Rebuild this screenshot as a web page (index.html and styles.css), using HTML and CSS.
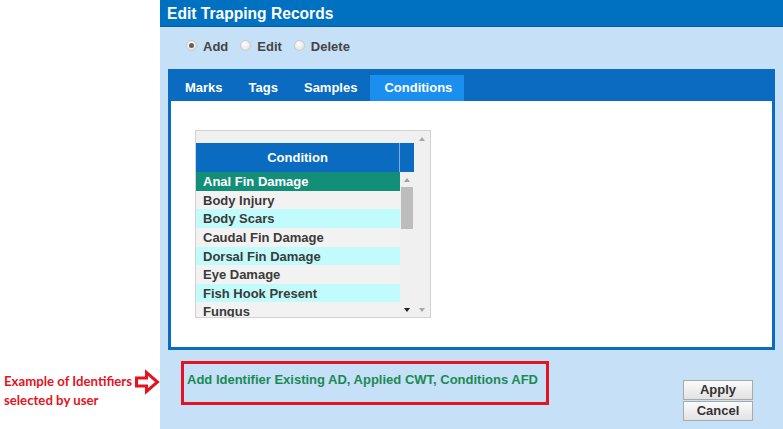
FILE: index.html
```html
<!DOCTYPE html>
<html>
<head>
<meta charset="utf-8">
<link rel="stylesheet" href="styles.css">
</head>
<body>
<div class="page">
  <aside class="note-col">
    <div class="note">
      <div class="note-text">Example of Identifiers<br>selected by user</div>
      <svg class="note-arrow" width="26" height="26" viewBox="0 0 26 26">
        <path d="M2.5 9 H12.5 V3.5 L23.5 13 L12.5 22.5 V17 H2.5 Z" fill="#fff" stroke="#e3141f" stroke-width="3" stroke-linejoin="miter"/>
      </svg>
    </div>
  </aside>
  <main class="dialog">
    <header class="title">Edit Trapping Records</header>
    <div class="modes">
      <label class="mode"><span class="radio checked"></span>Add</label>
      <label class="mode"><span class="radio"></span>Edit</label>
      <label class="mode"><span class="radio"></span>Delete</label>
    </div>
    <section class="tabpanel">
      <nav class="tabs">
        <span class="tab">Marks</span>
        <span class="tab">Tags</span>
        <span class="tab">Samples</span>
        <span class="tab active">Conditions</span>
      </nav>
      <div class="tab-body">
        <div class="listbox">
          <div class="list-inner">
            <div class="list-head">
              <div class="head-cell">Condition</div>
              <div class="head-spacer"></div>
            </div>
            <div class="list-body">
              <div class="rows">
                <div class="row sel">Anal Fin Damage</div>
                <div class="row">Body Injury</div>
                <div class="row alt">Body Scars</div>
                <div class="row">Caudal Fin Damage</div>
                <div class="row alt">Dorsal Fin Damage</div>
                <div class="row">Eye Damage</div>
                <div class="row alt">Fish Hook Present</div>
                <div class="row">Fungus</div>
              </div>
              <div class="inner-scroll">
                <span class="arr up dark"></span>
                <span class="thumb"></span>
                <span class="grow"></span>
                <span class="arr down black"></span>
              </div>
            </div>
          </div>
          <div class="outer-scroll">
            <span class="arr up"></span>
            <span class="grow"></span>
            <span class="arr down"></span>
          </div>
        </div>
      </div>
    </section>
    <div class="footer">
      <div class="selected">Add Identifier Existing AD, Applied CWT, Conditions AFD</div>
      <div class="buttons">
        <button class="btn">Apply</button>
        <button class="btn">Cancel</button>
      </div>
    </div>
  </main>
</div>
</body>
</html>
```

FILE: styles.css
```css
html, body {
  margin: 0;
  padding: 0;
  background: #ffffff;
}
body {
  font-family: "Liberation Sans", Arial, sans-serif;
  font-weight: bold;
  font-size: 13px;
}
.page {
  display: flex;
  width: 783px;
  height: 429px;
  overflow: hidden;
}
.note-col {
  width: 160px;
  flex: none;
  background: #ffffff;
}
.note {
  display: flex;
  align-items: flex-start;
  padding-top: 369px;
  padding-left: 4px;
}
.note-text {
  font-family: Lato, "Open Sans", sans-serif;
  font-weight: bold;
  font-size: 13.2px;
  line-height: 19px;
  color: #e3141f;
  padding-top: 3px;
  width: 130px;
  white-space: nowrap;
}
.note-arrow {
  margin-top: 0px;
  margin-left: 0px;
}
.dialog {
  flex: 1;
  background: #c6e0f8;
  display: flex;
  flex-direction: column;
}
.title {
  height: 26px;
  background: #0070c0;
  border-bottom: 1px solid #0a5c9e;
  color: #ffffff;
  font-size: 15.6px;
  line-height: 27px;
  padding-left: 7px;
}
.modes {
  height: 42px;
  display: flex;
  align-items: center;
  padding-left: 26px;
  color: #444;
  font-size: 13px;
  box-sizing: border-box;
  padding-bottom: 4px;
}
.mode {
  display: flex;
  align-items: center;
  margin-right: 12px;
}
.radio {
  width: 9px;
  height: 9px;
  border-radius: 50%;
  border: 1px solid #c8c8c8;
  background: radial-gradient(circle at 40% 35%, #fdfdfd, #dcdcdc);
  margin-right: 6px;
  margin-top: -2px;
  position: relative;
}
.radio.checked::after {
  content: "";
  position: absolute;
  left: 2px;
  top: 2px;
  width: 5px;
  height: 5px;
  border-radius: 50%;
  background: #6a5f58;
}
.tabpanel {
  margin: 0 8px 0 8px;
  border: 3px solid #0a6bc0;
  border-top: none;
  background: #ffffff;
  height: 281px;
  box-sizing: border-box;
  display: flex;
  flex-direction: column;
}
.tabs {
  height: 32px;
  background: #0a6bc0;
  display: flex;
  align-items: flex-end;
}
.tab {
  height: 26px;
  line-height: 25px;
  padding: 0 13px;
  color: #ffffff;
  font-size: 13px;
}
.tab:first-child { padding-left: 14px; }
.tab.active {
  background: #1a8ff0;
  padding: 0 12px 0 14px;
}
.tab-body {
  flex: 1;
  padding: 29px 0 0 24px;
}
.listbox {
  width: 236px;
  height: 188px;
  border: 1px solid #d2d2d2;
  box-sizing: border-box;
  display: flex;
  background: #f0f0f0;
  overflow: hidden;
}
.list-inner {
  width: 218px;
  padding-top: 12px;
  display: flex;
  flex-direction: column;
}
.list-head {
  display: flex;
  height: 29px;
}
.head-cell {
  width: 203px;
  background: #0a6bc0;
  color: #ffffff;
  text-align: center;
  line-height: 29px;
  font-size: 13px;
  border-right: 1px solid #7fb0dc;
}
.head-spacer {
  flex: 1;
  background: #0a6bc0;
}
.list-body {
  display: flex;
  flex: 1;
  overflow: hidden;
}
.rows {
  width: 204px;
}
.row {
  height: 18.65px;
  line-height: 19px;
  padding-left: 7px;
  color: #3a3a3a;
  background: #f2f2f2;
  font-size: 13px;
  white-space: nowrap;
}
.row.alt {
  background: #c2fbfb;
}
.row.sel {
  background: #138f79;
  color: #ffffff;
}
.inner-scroll {
  width: 14px;
  display: flex;
  flex-direction: column;
  align-items: center;
  background: #f0f0f0;
}
.outer-scroll {
  flex: 1;
  display: flex;
  flex-direction: column;
  align-items: center;
  padding: 6px 0 5px;
}
.grow { flex: 1; }
.arr {
  width: 0;
  height: 0;
  border-left: 3.5px solid transparent;
  border-right: 3.5px solid transparent;
}
.arr.up {
  border-bottom: 4px solid #a8a8a8;
}
.arr.down {
  border-top: 4px solid #a8a8a8;
}
.inner-scroll .arr.up {
  margin-top: 6px;
  border-bottom-color: #a0a0a0;
}
.inner-scroll .arr.down {
  margin-bottom: 5px;
  border-top-color: #222;
}
.thumb {
  width: 12px;
  height: 42px;
  background: #bdbdbd;
  margin-top: 5px;
}
.footer {
  display: flex;
  justify-content: space-between;
  align-items: flex-start;
}
.selected {
  margin-left: 21px;
  margin-top: 11px;
  width: 368px;
  height: 44px;
  box-sizing: border-box;
  border: 3px solid #e3141f;
  color: #1a8a55;
  font-size: 13px;
  padding: 8px 0 0 3px;
}
.buttons {
  margin-top: 30px;
  margin-right: 30px;
  display: flex;
  flex-direction: column;
  gap: 1px;
}
.btn {
  width: 70px;
  height: 20px;
  font-family: "Liberation Sans", Arial, sans-serif;
  font-weight: bold;
  font-size: 13px;
  color: #333;
  border: 1px solid #a9a9a9;
  background: linear-gradient(#fbfbfb, #e2e2e2);
  padding: 0;
  line-height: 18px;
}
```
